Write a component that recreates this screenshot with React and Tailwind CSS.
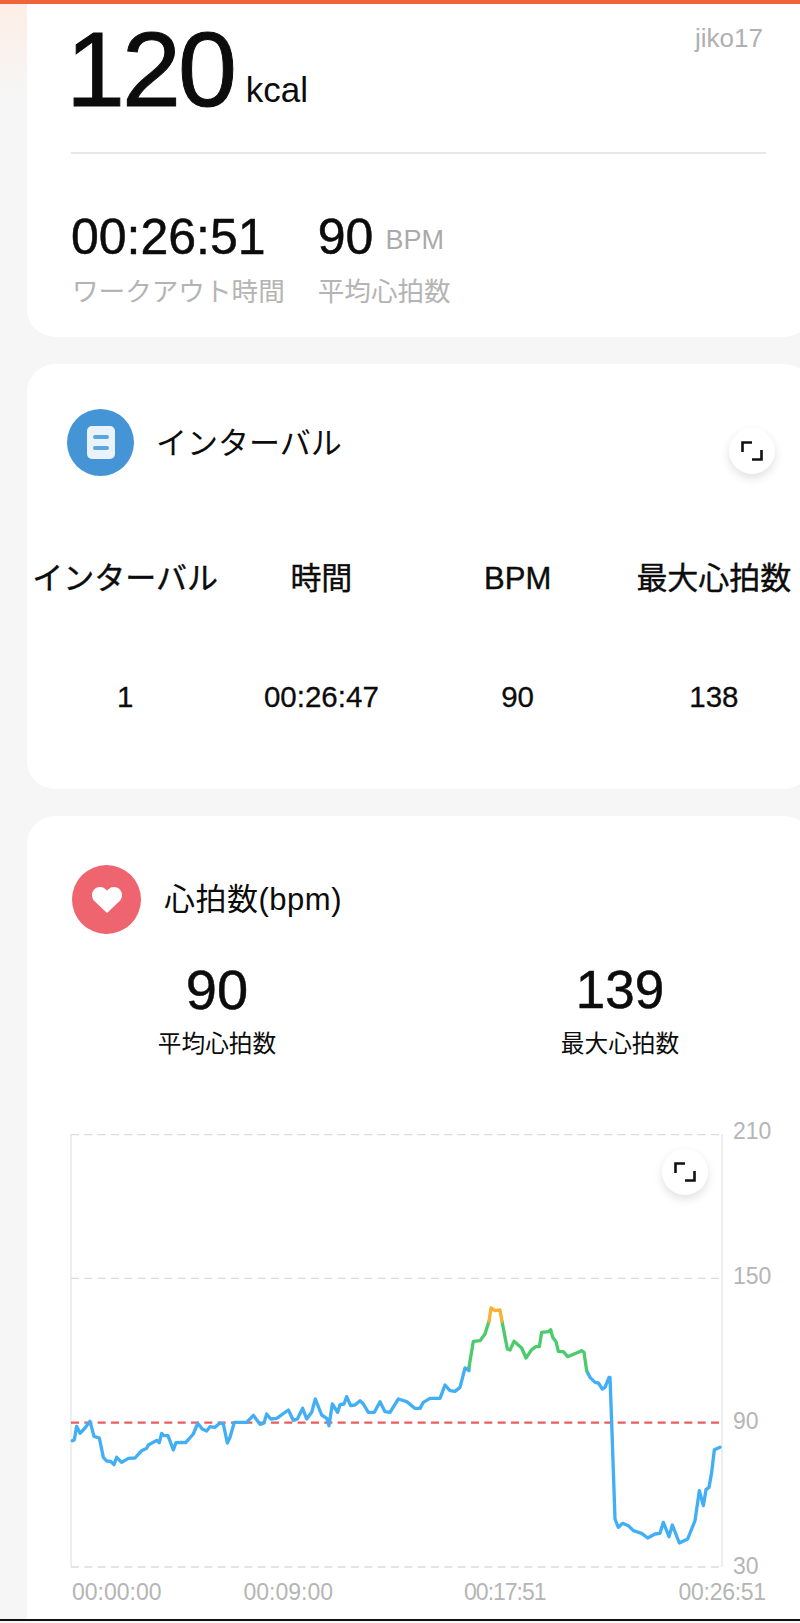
import React from "react";

// chart points, 3 units per pixel, origin at (40,1280) of the page
const blue1 = [[97,485],[103,482],[110,442],[120,463],[135,447],[150,427],[162,472],[178,477],[190,535],[200,546],[212,547],[222,557],[230,535],[245,550],[265,538],[285,537],[305,515],[320,508],[325,498],[350,484],[358,491],[365,463],[372,470],[384,470],[400,513],[408,491],[425,490],[437,491],[460,465],[473,433],[487,450],[500,456],[510,443],[525,445],[540,432],[550,435],[562,492],[570,475],[583,430],[620,430],[640,409],[660,436],[672,432],[680,405],[692,420],[710,418],[745,393],[760,424],[772,420],[788,388],[800,420],[815,400],[826,360],[845,408],[860,418],[867,440],[877,375],[893,400],[900,377],[912,375],[920,353],[932,380],[945,378],[960,365],[970,375],[985,400],[1003,400],[1020,368],[1035,398],[1050,400],[1075,360],[1100,368],[1125,388],[1140,388]];

// the rest was read from the right half, so x is shifted by 1140
const blue2 = [[0,388],[10,370],[30,358],[60,358],[75,318],[90,335],[105,337],[120,325],[135,267],[147,275],[147,265]];
const green1 = [[147,265],[160,187],[180,185],[195,165],[207,127]];
const orange = [[207,127],[213,87],[225,95],[240,93],[246,127]];
const green2 = [[246,127],[262,210],[270,213],[282,187],[305,207],[318,237],[335,212],[348,203],[358,203],[365,160],[385,158],[392,152],[398,175],[408,188],[415,217],[430,218],[443,233],[485,215],[492,220],[500,275]];
const blue3 = [[500,275],[510,295],[525,310],[535,312],[547,330],[555,325],[567,295],[570,295],[575,430],[585,720],[595,745],[608,733],[625,740],[640,755],[665,763],[683,777],[705,765],[720,763],[730,730],[747,773],[757,738],[778,792],[803,780],[825,725],[838,635],[850,680],[858,632],[867,625],[875,580],[883,512],[900,505]];

const pts = (list, dx = 0) => list.map(([x, y]) => `${x + dx},${y}`).join(" ");

const ExpandButton = ({ className }) => (
  <div className={`absolute w-[46px] h-[46px] rounded-full bg-white shadow-[0_4px_10px_rgba(0,0,0,0.12)] flex items-center justify-center ${className}`}>
    <svg width="22" height="20" viewBox="0 0 22 20" fill="none" stroke="#111" strokeWidth="2.6">
      <path d="M1.5 11V1.5H11" />
      <path d="M20.5 9V18.5H11" />
    </svg>
  </div>
);

const HeartRateChart = () => (
  <svg className="block w-[651px] h-[433px] overflow-visible" viewBox="93 -435 1953 1299" fill="none">
    <path d="M93 -435V864M2046 -435V864" stroke="#e6e6e6" strokeWidth="4" />
    <path d="M93 -433H2046M93 -2H2046M93 864H2046" stroke="#dcdcdc" strokeWidth="4" strokeDasharray="24 16" />
    <path d="M93 431H2046" stroke="#e85d5d" strokeWidth="7" strokeDasharray="24 16" />
    <g strokeWidth="10" strokeLinejoin="round" strokeLinecap="round">
      <polyline points={pts(blue1)} stroke="#42aef6" />
      <polyline points={pts(blue2, 1140)} stroke="#42aef6" />
      <polyline points={pts(blue3, 1140)} stroke="#42aef6" />
      <polyline points={pts(green1, 1140)} stroke="#4ccb6c" />
      <polyline points={pts(green2, 1140)} stroke="#4ccb6c" />
      <polyline points={pts(orange, 1140)} stroke="#f8b133" />
    </g>
  </svg>
);

const App = () => {
  return (
    <div className="h-[1623px] w-[800px] overflow-hidden bg-[#f6f6f6] text-[#0c0c0c] [font-family:'Liberation_Sans','Noto_Sans_CJK_JP',sans-serif]">
      <div className="h-1 bg-[#f0643a]" />
      <div className="bg-gradient-to-b from-[#fdeee6] to-[#f6f6f6] to-[90px] pl-[27px]">
        {/* summary */}
        <section className="h-[333px] w-[785px] rounded-b-[28px] bg-white pl-[39px] pr-[46px] pt-[1px]">
          <div className="flex items-start justify-between">
            <div className="flex items-end gap-[12px]">
              <span className="text-[106px] leading-[128px] tracking-[-3px] [-webkit-text-stroke:1px_#0c0c0c]">120</span>
              <span className="mb-[23px] text-[35px] leading-[40px]">kcal</span>
            </div>
            <span className="mt-[18px] mr-[3px] text-[26px] leading-[30px] text-[#b0b0b0]">jiko17</span>
          </div>
          <div className="mt-[19px] ml-[5px] h-[2px] bg-[#e8e8e8]" />
          <div className="mt-[53px] ml-[5px] flex gap-[33px]">
            <div>
              <div className="text-[50px] leading-[60px] [-webkit-text-stroke:0.5px_#0c0c0c]">00:26:51</div>
              <div className="mt-[7px] pl-[1px] text-[26.6px] leading-[36px] text-[#b4b4b4]">ワークアウト時間</div>
            </div>
            <div>
              <div className="flex items-center gap-[12px]">
                <span className="text-[50px] leading-[60px] [-webkit-text-stroke:0.5px_#0c0c0c]">90</span>
                <span className="mt-[6px] text-[27px] leading-[30px] text-[#aaaaaa]">BPM</span>
              </div>
              <div className="mt-[7px] text-[26.6px] leading-[36px] text-[#b4b4b4]">平均心拍数</div>
            </div>
          </div>
        </section>

        {/* intervals */}
        <section className="relative mt-[27px] h-[425px] w-[785px] rounded-[28px] bg-white pt-[45px]">
          <div className="ml-[40px] flex items-center gap-[22px]">
            <div className="flex h-[67px] w-[67px] items-center justify-center rounded-full bg-[#4594d6]">
              <div className="flex h-[33px] w-[28px] flex-col items-center justify-center gap-[7px] rounded-[5px] bg-[#eaf3fb]">
                <div className="h-[4px] w-[16px] rounded-full bg-[#5aa6de]" />
                <div className="h-[4px] w-[16px] rounded-full bg-[#5aa6de]" />
              </div>
            </div>
            <h2 className="mt-[3px] text-[31px] font-normal leading-[40px]">インターバル</h2>
          </div>
          <ExpandButton className="right-[37px] top-[64px]" />
          <div className="mt-[83px] grid grid-cols-4 text-center">
            <div className="text-[31px] leading-[40px] [-webkit-text-stroke:0.4px_#0c0c0c]">インターバル</div>
            <div className="text-[31px] leading-[40px] [-webkit-text-stroke:0.4px_#0c0c0c]">時間</div>
            <div className="text-[31px] leading-[40px] [-webkit-text-stroke:0.4px_#0c0c0c]">BPM</div>
            <div className="text-[31px] leading-[40px] [-webkit-text-stroke:0.4px_#0c0c0c]">最大心拍数</div>
          </div>
          <div className="mt-[78px] grid grid-cols-4 text-center text-[29.5px] leading-[40px] [-webkit-text-stroke:0.3px_#0c0c0c]">
            <div>1</div>
            <div>00:26:47</div>
            <div>90</div>
            <div>138</div>
          </div>
        </section>

        {/* heart rate */}
        <section className="mt-[27px] h-[805px] w-[785px] rounded-t-[28px] bg-white pt-[49px]">
          <div className="ml-[45px] flex items-center gap-[23px]">
            <div className="flex h-[69px] w-[69px] items-center justify-center rounded-full bg-[#ee6570]">
              <svg width="30" height="26" viewBox="0 0 30 26" fill="#fff">
                <path d="M15 26 2.6 14.2C-.9 10.6-.8 5.4 2.4 2.3 5.6-.8 10.8-.7 13.9 2.5L15 3.7l1.1-1.2c3.1-3.2 8.3-3.3 11.5-.2 3.2 3.1 3.3 8.3-.2 11.9z" />
              </svg>
            </div>
            <h2 className="text-[31px] font-normal leading-[40px] tracking-[0.5px]">心拍数(bpm)</h2>
          </div>

          <div className="mt-[26px] ml-[20px] grid grid-cols-[340px_340px] gap-x-[63px] text-center">
            <div>
              <div className="text-[56px] leading-[60px] [-webkit-text-stroke:0.5px_#0c0c0c]">90</div>
              <div className="mt-[8px] text-[23.7px] leading-[32px]">平均心拍数</div>
            </div>
            <div>
              <div className="text-[53px] leading-[60px] [-webkit-text-stroke:0.5px_#0c0c0c]">139</div>
              <div className="mt-[8px] text-[23.7px] leading-[32px]">最大心拍数</div>
            </div>
          </div>

          <div className="ml-[44px] mt-[74px] flex items-stretch">
            <div className="relative">
              <HeartRateChart />
              <ExpandButton className="left-[591px] top-[15px]" />
            </div>
            <div className="-mt-[17px] -mb-[13px] ml-[11px] flex flex-col justify-between text-[23px] leading-[28px] text-[#b5b5b5]">
              <span>210</span>
              <span>150</span>
              <span>90</span>
              <span>30</span>
            </div>
          </div>
          <div className="ml-[45px] mt-[11px] flex text-[23px] leading-[28px] text-[#b5b5b5]">
            <span>00:00:00</span>
            <span className="ml-[82px]">00:09:00</span>
            <span className="ml-[131px] tracking-[-1px]">00:17:51</span>
            <span className="ml-[133px] tracking-[-0.3px]">00:26:51</span>
          </div>
        </section>
      </div>
      <div className="-mt-[2px] h-[2px] bg-[#111111]" />
    </div>
  );
};

export default App;
